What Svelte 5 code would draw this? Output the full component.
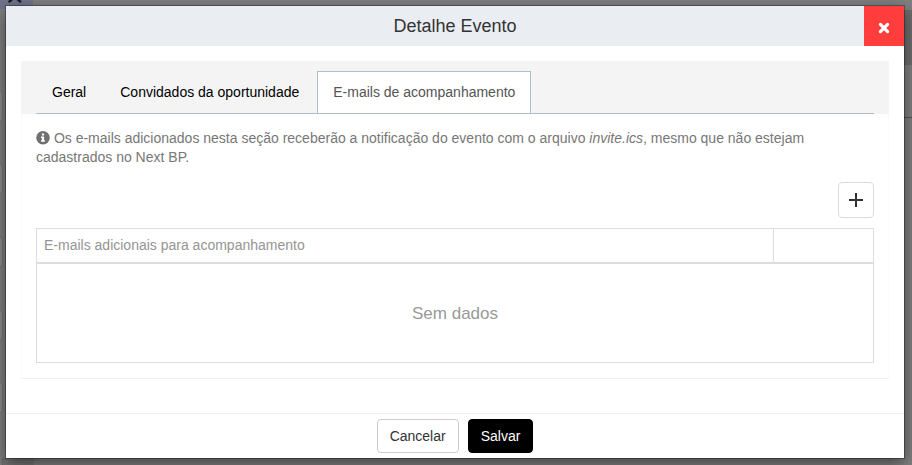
<script>
  const tabs = ['Geral', 'Convidados da oportunidade', 'E-mails de acompanhamento'];
  let active = $state(2);
  // Controls of the page that stay partly visible behind the modal
  const fields = [
    { top: 90, height: 32 },
    { top: 163, height: 32 },
    { top: 236, height: 32 },
    { top: 309, height: 32 },
    { top: 381, height: 33 },
    { top: 455, height: 32 }
  ];
</script>

<div class="page">
  <div class="backdrop" aria-hidden="true">
    <div class="brand">
      <svg width="14" height="6" viewBox="0 0 14 6"><path d="M.6 2.2 4.5-1M9-1l4 3.2" stroke="#17181c" stroke-width="2.2" fill="none" /></svg>
    </div>
    {#each fields as f}
      <div class="field" style="top:{f.top}px;height:{f.height}px"></div>
    {/each}
    <div class="side"></div>
    <div class="rule"></div>
    <div class="corner"></div>
  </div>

  <div class="modal" role="dialog" aria-label="Detalhe Evento">
    <header>
      <h1>Detalhe Evento</h1>
      <button class="close" aria-label="Fechar">
        <svg width="12" height="12" viewBox="0 0 12 12"><path d="M2.4 2.4 9.6 9.6M9.6 2.4 2.4 9.6" stroke="#fff" stroke-width="3.2" stroke-linecap="round" /></svg>
      </button>
    </header>

    <main>
      <section class="panel">
        <div class="tabbar">
          <nav>
            {#each tabs as tab, i}
              <button class="tab" class:active={active === i} onclick={() => (active = i)}>{tab}</button>
            {/each}
          </nav>
        </div>
        <div class="content">
          <p>
            <svg class="info" width="14" height="14" viewBox="0 0 14 14"><circle cx="7" cy="6.8" r="6.8" fill="#707070" /><path d="M5.9 2.4h2.2v2H5.9zM5 5.5h3.1v3.8H9v1.5H5V9.3h.9V7H5z" fill="#fff" /></svg>
            Os e-mails adicionados nesta seção receberão a notificação do evento com o arquivo <i>invite.ics</i>, mesmo que não estejam cadastrados no Next BP.
          </p>
          <div class="toolbar">
            <button class="add" aria-label="Adicionar">
              <svg width="14" height="14" viewBox="0 0 14 14"><path d="M0 7h14M7 0v14" stroke="#333" stroke-width="2" /></svg>
            </button>
          </div>
          <div class="table">
            <div class="thead">
              <div class="th">E-mails adicionais para acompanhamento</div>
              <div class="th actions"></div>
            </div>
            <div class="empty">Sem dados</div>
          </div>
        </div>
      </section>
    </main>

    <footer>
      <button class="btn">Cancelar</button>
      <button class="btn primary">Salvar</button>
    </footer>
  </div>
</div>

<style>
  :global(body) {
    margin: 0;
    overflow: hidden;
  }
  .page,
  .page * {
    box-sizing: border-box;
  }
  .page {
    position: relative;
    width: 912px;
    height: 465px;
    padding: 6px 8px 7px 6px;
    overflow: hidden;
    background: #7f7f7f;
    font: 14px/20px 'Liberation Sans', Arial, sans-serif;
    color: #333;
  }
  button {
    margin: 0;
    padding: 0;
    font: inherit;
    cursor: pointer;
  }
  .backdrop {
    position: absolute;
    inset: 0;
  }
  .brand {
    position: absolute;
    left: 0;
    top: 0;
    width: 33px;
    height: 9px;
    padding-left: 8px;
    background: #6f748a;
  }
  .brand svg {
    display: block;
  }
  .field {
    position: absolute;
    left: -8px;
    width: 11px;
    border: 1px solid #727272;
    border-radius: 4px;
    background: #8b8b8b;
  }
  .side {
    position: absolute;
    left: 904px;
    top: 10px;
    width: 8px;
    height: 55px;
    background: #6c6c6c;
  }
  .rule {
    position: absolute;
    left: 904px;
    top: 117px;
    width: 8px;
    height: 1px;
    background: #555;
  }
  .corner {
    position: absolute;
    left: 0;
    top: 458px;
    width: 34px;
    height: 7px;
    background: rgba(0, 0, 0, 0.1);
  }
  .modal {
    position: relative;
    display: flex;
    flex-direction: column;
    height: 452px;
    background: #fff;
    box-shadow: 0 0 0 1px rgba(0, 0, 0, 0.3), 0 5px 15px rgba(0, 0, 0, 0.5);
  }
  header {
    display: flex;
    height: 40px;
    background: #eaeef2;
  }
  h1 {
    flex: 1;
    margin: 0 -40px 0 0;
    text-align: center;
    font-size: 18px;
    font-weight: 400;
    line-height: 40px;
  }
  .close {
    display: flex;
    align-items: center;
    justify-content: center;
    width: 40px;
    height: 40px;
    padding-top: 4px;
    border: 0;
    background: #ff3d3d;
  }
  main {
    flex: 1;
    padding: 15px;
  }
  .panel {
    height: 318px;
    border: solid #f1f1f1;
    border-width: 0 0 1px;
    box-shadow: inset 1px 0 #fbfbfb, inset -1px 0 #fbfbfb;
  }
  .tabbar {
    height: 53px;
    padding: 10px 15px 0;
    background: #f4f4f4;
  }
  nav {
    display: flex;
    gap: 2px;
    height: 43px;
    border-bottom: 1px solid #adbfcd;
  }
  .tab {
    height: 42px;
    padding: 0 15px 2px;
    border: 1px solid transparent;
    border-bottom: 0;
    background: transparent;
    color: #000;
    white-space: nowrap;
  }
  .tab.active {
    border-color: #adbfcd;
    background: #fff;
    color: #555;
  }
  .content {
    padding: 15px;
  }
  p {
    margin: 0;
    height: 38px;
    line-height: 19px;
    color: #777;
  }
  .info {
    display: inline-block;
    vertical-align: -2px;
  }
  .toolbar {
    display: flex;
    justify-content: flex-end;
    padding: 15px 0 10px;
  }
  .add {
    display: flex;
    align-items: center;
    justify-content: center;
    width: 36px;
    height: 36px;
    border: 1px solid #ddd;
    border-radius: 4px;
    background: #fff;
  }
  .table {
    height: 135px;
    border: 1px solid #ddd;
  }
  .thead {
    display: flex;
    height: 35px;
    border-bottom: 2px solid #ddd;
  }
  .th {
    flex: 1;
    padding: 0 7px;
    line-height: 33px;
    color: #959595;
  }
  .actions {
    flex: 0 0 100px;
    border-left: 1px solid #ddd;
  }
  .empty {
    line-height: 99px;
    text-align: center;
    font-size: 17px;
    color: #999;
  }
  footer {
    display: flex;
    justify-content: center;
    gap: 9px;
    height: 45px;
    padding-top: 5px;
    border-top: 1px solid #f1f1f1;
  }
  .btn {
    height: 34px;
    padding: 0 12px;
    border: 1px solid #ccc;
    border-radius: 4px;
    background: #fff;
    color: #333;
  }
  .primary {
    border-color: #000;
    background: #000;
    color: #fff;
  }
</style>
